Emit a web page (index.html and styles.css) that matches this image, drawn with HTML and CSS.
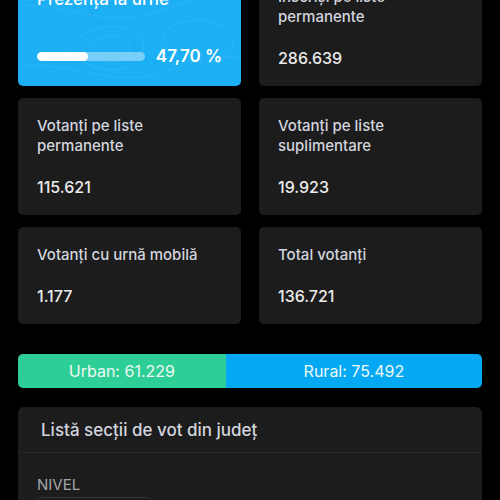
FILE: index.html
```html
<!DOCTYPE html>
<html lang="ro">

<head>
  <meta charset="UTF-8">
  <meta name="viewport" content="width=device-width, initial-scale=1.0">
  <title>Prezență vot</title>

  <link rel="stylesheet" href="styles.css">
</head>

<body>
  <div class="page">

    <div class="stats">
      <div class="card blue">
        <svg class="topo" viewBox="0 0 223 117" preserveAspectRatio="none">
          <path d="M-10 20 C40 5 70 40 120 25 S190 -5 240 15" />
          <path d="M-10 40 C30 25 80 60 130 45 S200 20 240 35" />
          <path d="M60 70 C80 50 120 55 125 75 S95 110 70 95 S50 80 60 70 Z" />
          <path d="M75 75 C85 62 110 66 112 78 S92 98 80 90 S70 82 75 75 Z" />
          <path d="M-10 100 C40 85 90 120 140 105 S200 80 240 95" />
          <path d="M150 60 C170 45 210 50 215 70 S190 100 165 90 S140 72 150 60 Z" />
        </svg>
        <p class="title">Prezența la urne</p>
        <div class="progress">
          <div class="track"><div class="fill" style="width: 47.7%"></div></div>
          <span class="pct">47,70 %</span>
        </div>
      </div>

      <div class="card">
        <p class="label">Înscriși pe liste permanente</p>
        <p class="value">286.639</p>
      </div>

      <div class="card">
        <p class="label">Votanți pe liste permanente</p>
        <p class="value">115.621</p>
      </div>

      <div class="card">
        <p class="label">Votanți pe liste suplimentare</p>
        <p class="value">19.923</p>
      </div>

      <div class="card">
        <p class="label">Votanți cu urnă mobilă</p>
        <p class="value">1.177</p>
      </div>

      <div class="card">
        <p class="label">Total votanți</p>
        <p class="value">136.721</p>
      </div>
    </div>

    <div class="split">
      <div class="urban" style="width: 44.78%">Urban: 61.229</div>
      <div class="rural">Rural: 75.492</div>
    </div>

    <div class="section">
      <div class="section-head">Listă secții de vot din județ</div>
      <div class="section-body">
        <p class="field">NIVEL</p>
        <div class="select"></div>
      </div>
    </div>

  </div>
</body>

</html>
```

FILE: styles.css
```css
body {
  margin: 0;
  background-color: #000;
  font-family: Inter, "Noto Sans", sans-serif;
  color: #d4d6de;
}

p {
  margin: 0;
}

.page {
  margin-top: -31px;
  padding: 0 18px;
}

.stats {
  display: grid;
  grid-template-columns: 1fr 1fr;
  column-gap: 18px;
  row-gap: 12px;
}

.card {
  position: relative;
  background-color: #1c1c1c;
  border-radius: 5px;
  padding: 18px 19px;
  display: flex;
  flex-direction: column;
  overflow: hidden;
}

.card .label {
  font-size: 15px;
  line-height: 20px;
  font-weight: 500;
  color: #d2d5df;
}

.card .value {
  margin-top: 21px;
  font-size: 16px;
  line-height: 20px;
  font-weight: 500;
  color: #ececec;
}

.blue {
  background-color: #1daff4;
  justify-content: space-between;
}

.topo {
  position: absolute;
  left: 0;
  top: 0;
  width: 100%;
  height: 100%;
}

.topo path {
  fill: none;
  stroke: rgba(255, 255, 255, 0.07);
  stroke-width: 1;
}

.blue .title {
  position: relative;
  font-size: 17px;
  line-height: 24px;
  font-weight: 500;
  color: #fff;
}

.progress {
  position: relative;
  display: flex;
  align-items: center;
  gap: 11px;
  height: 24px;
}

.track {
  flex: 1;
  height: 9px;
  border-radius: 5px;
  background-color: rgba(255, 255, 255, 0.4);
  overflow: hidden;
}

.fill {
  height: 100%;
  background-color: #fff;
  border-radius: 5px;
}

.pct {
  font-size: 17px;
  font-weight: 600;
  color: #fff;
}

.split {
  display: flex;
  margin-top: 30px;
  height: 34px;
  border-radius: 5px;
  overflow: hidden;
  font-size: 16px;
  color: #eef8f4;
}

.split>div {
  display: flex;
  align-items: center;
  justify-content: center;
}

.urban {
  background-color: #2ecf96;
}

.rural {
  flex: 1;
  background-color: #04a8f3;
}

.section {
  margin-top: 19px;
  background-color: #1c1c1c;
  border-radius: 6px;
  overflow: hidden;
}

.section-head {
  padding: 0 23px;
  height: 45px;
  line-height: 46px;
  font-size: 17px;
  font-weight: 500;
  color: #d2d5df;
  border-bottom: 1px solid #272732;
}

.section-body {
  padding: 22px 19px;
}

.field {
  font-size: 15px;
  line-height: 20px;
  color: #a3a6ae;
}

.select {
  margin-top: 2px;
  width: 113px;
  height: 34px;
  border: 1px solid #333;
  border-radius: 5px;
}
```
